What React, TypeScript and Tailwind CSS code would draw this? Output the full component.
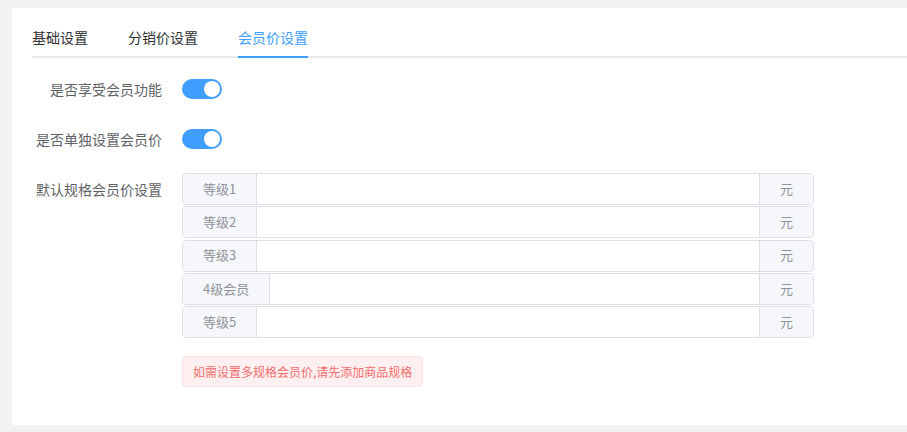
import { useState } from "react";

const levels = ["等级1", "等级2", "等级3", "4级会员", "等级5"];
const tabs = ["基础设置", "分销价设置", "会员价设置"];

function Toggle({ on, onChange }: { on: boolean; onChange: () => void }) {
  return (
    <button
      onClick={onChange}
      className={`relative block h-5 w-10 rounded-full transition-colors ${
        on ? "bg-[#409eff]" : "bg-[#dcdfe6]"
      }`}
    >
      <span
        className={`absolute top-[2px] size-4 rounded-full bg-white transition-all ${
          on ? "left-[22px]" : "left-[2px]"
        }`}
      />
    </button>
  );
}

export default function App() {
  const [member, setMember] = useState(true);
  const [single, setSingle] = useState(true);

  return (
    <div
      className="h-[432px] w-[907px] overflow-hidden bg-[#f2f2f2] pl-3 pt-2"
      style={{ fontFamily: '"Noto Sans CJK SC", "Noto Sans", sans-serif' }}
    >
      <div className="h-[417px] bg-white pl-5 pt-[9px]">
        {/* tabs */}
        <div className="flex h-[41px] gap-10 border-b-2 border-[#e4e7ed]">
          {tabs.map((t, i) => (
            <div
              key={t}
              className={`-mb-[2px] flex h-[41px] items-center border-b-2 text-sm ${
                i === 2
                  ? "border-[#409eff] text-[#409eff]"
                  : "border-transparent text-[#303133]"
              }`}
            >
              {t}
            </div>
          ))}
        </div>

        {/* form */}
        <div className="mt-[15px] flex flex-col gap-[18px] text-sm text-[#606266]">
          <div className="flex h-8 items-center">
            <label className="w-[130px] text-right">是否享受会员功能</label>
            <div className="ml-5 flex">
              <Toggle on={member} onChange={() => setMember(!member)} />
            </div>
          </div>
          <div className="flex h-8 items-center">
            <label className="w-[130px] text-right">是否单独设置会员价</label>
            <div className="ml-5 flex">
              <Toggle on={single} onChange={() => setSingle(!single)} />
            </div>
          </div>
          <div className="flex">
            <label className="w-[130px] text-right leading-8">默认规格会员价设置</label>
            <div className="ml-5 flex flex-col">
              <div className="flex w-[632px] flex-col gap-[1.33px]">
                {levels.map((l) => (
                  <div
                    key={l}
                    className="flex h-8 overflow-hidden rounded border border-[#dcdfe6] text-[13px]"
                  >
                    <div className="flex items-center border-r border-[#dcdfe6] bg-[#f5f7fa] px-5 text-[#909399]">
                      {l}
                    </div>
                    <input className="min-w-0 flex-1 px-4 outline-none" />
                    <div className="flex items-center border-l border-[#dcdfe6] bg-[#f5f7fa] px-5 text-[#909399]">
                      元
                    </div>
                  </div>
                ))}
              </div>
              <div className="mt-[18px] flex h-[31px] w-[241px] items-center whitespace-nowrap rounded border border-[#fde2e2] bg-[#fef0f0] pl-[10px] text-xs text-[#f56c6c]">
                如需设置多规格会员价,请先添加商品规格
              </div>
            </div>
          </div>
        </div>
      </div>
    </div>
  );
}
